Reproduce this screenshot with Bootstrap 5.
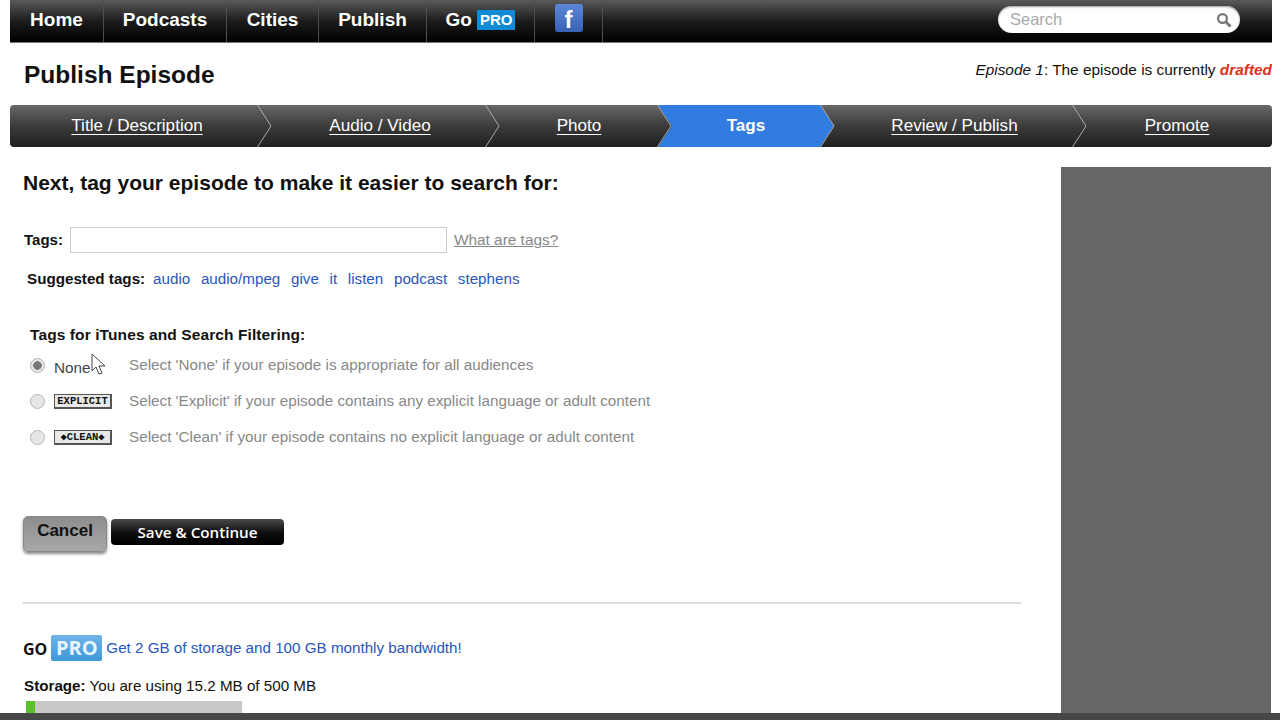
<!DOCTYPE html>
<html lang="en">
<head>
    <meta charset="UTF-8">
    <meta name="viewport" content="width=device-width, initial-scale=1.0">
    <title>Publish Episode</title>
    <link href="https://cdn.jsdelivr.net/npm/bootstrap@5.3.0/dist/css/bootstrap.min.css" rel="stylesheet">
    <style>
        /* page frame */
        html, body { height: 720px; overflow: hidden; }
        body { font-family: "Liberation Sans", Arial, sans-serif; font-size: 14px; color: #111; background: #fff; }
        .page-wrap { height: 713px; margin: 0 8px 0 10px; overflow: hidden; }
        .bottom-strip { height: 7px; background: #474747; }

        /* top nav */
        .top-bar { height: 43px; background: linear-gradient(#5a5a5a 0, #1c1c1c 50%, #000 100%); border-bottom: 1px solid #777; }
        .top-item { display: flex; align-items: center; justify-content: center; height: 42px; padding-bottom: 2px; color: #fff; font-size: 19px; font-weight: 700; text-decoration: none; border-right: 1px solid #4c4c4c; }
        .w-home { width: 94px; }
        .w-podcasts { width: 123px; }
        .w-cities { width: 92px; }
        .w-publish { width: 108px; }
        .w-go { width: 108px; }
        .w-fb { width: 68px; }
        .pro-small { background: #0d8bd6; color: #fff; font-size: 15px; font-weight: 700; padding: 1px 3px; margin-left: 5px; line-height: 18px; }
        .fb-box { width: 28px; height: 28px; margin-top: -4px; padding-top: 3px; background: linear-gradient(#5b86d8, #3a62b4); border-radius: 3px; color: #fff; font-size: 24px; font-weight: 700; line-height: 25px; text-align: center; }
        .search-pill { width: 242px; height: 27px; margin: 6px 32px 0 0; background: #fff; border-radius: 14px; padding: 0 8px 0 12px; box-shadow: 0 1px 2px #999 inset; }
        .search-input { border: 0; outline: 0; width: 190px; font-size: 16.5px; padding: 0; background: transparent; }
        .search-input::placeholder { color: #aaa; }

        /* title row */
        .title-row { height: 62px; padding: 0 0 0 14px; }
        .page-title { font-size: 24.5px; font-weight: 700; margin: 19px 0 0; line-height: 26px; color: #111; }
        .ep-status { font-size: 15.4px; margin-top: 18px; line-height: 18px; }
        .ep-drafted { color: #e0301e; font-weight: 700; font-style: italic; }

        /* wizard steps */
        .steps-bar { height: 42px; border-radius: 4px; background: linear-gradient(#686868 0, #3b3b3b 50%, #202020 100%); overflow: hidden; }
        .step-item { position: relative; display: flex; align-items: center; justify-content: center; height: 42px; padding-left: 14px; color: #fff; font-size: 17.1px; text-decoration: underline; text-underline-offset: 3px; }
        .step-chev { position: absolute; top: 0; right: -14px; width: 15px; height: 42px; z-index: 2; }
        .step-chev-left { right: auto; left: 0; }
        .s-title { width: 248px; padding-left: 6px; }
        .s-audio { width: 228px; padding-left: 16px; }
        .s-photo { width: 172px; }
        .s-tags { width: 176px; margin-right: -14px; padding-right: 14px; z-index: 1; background: #317ce0; font-weight: 700; text-decoration: none; clip-path: polygon(0 0, 162px 0, 176px 50%, 162px 100%, 0 100%, 14px 50%); }
        .s-review { width: 253px; padding-left: 16px; }
        .s-promote { width: 199px; padding-left: 9px; }

        /* left column */
        .main-col { width: 1051px; padding-left: 13px; position: relative; }
        .side-col { width: 210px; height: 546px; margin-top: 20px; background: #666; }
        .form-heading { font-size: 21px; font-weight: 700; line-height: 24px; margin: 24px 0 0; color: #111; }
        .tags-row { margin: 32px 0 0 1px; height: 26px; }
        .field-label { font-weight: 700; font-size: 15px; margin: 0 7px 0 0; }
        .tags-input { width: 377px; height: 26px; padding: 0 4px; border: 1px solid #ccc; border-radius: 0; }
        .what-link { color: #888; font-size: 15.4px; margin-left: 7px; }
        .suggest-row { margin: 16px 0 0 4px; line-height: 20px; }
        .suggest-row b { font-size: 15.2px; margin-right: 4px; }
        .tag-link { color: #2a56b8; text-decoration: none; font-size: 15.2px; margin-right: 10.7px; }
        .filter-title { font-weight: 700; font-size: 15.5px; margin: 36px 0 0 7px; line-height: 20px; letter-spacing: .1px; }
        .rating-row { height: 36px; margin-left: 7px; color: #888; font-size: 15.25px; }
        .filter-title + .rating-row { margin-top: 2px; }
        .rating-radio { width: 15px; height: 15px; margin: 0 10px 0 0; background-color: #e6e6e6; border: 1px solid #b5b5b5; flex: none; }
        .rating-radio:checked { background-color: #e6e6e6; border-color: #b5b5b5; background-image: radial-gradient(circle, #777 0 4px, transparent 4.5px); }
        .rating-tag { width: 58px; margin: 0 17px 0 -1px; flex: none; }
        .rating-none { color: #444; font-size: 15.25px; padding-top: 6px; }
        .rating-box { height: 15px; border: 1px solid #555; border-bottom-width: 2px; border-right-width: 2px; background: #e8e8e8; color: #111; font: 700 10.5px/12px "Liberation Mono", monospace; text-align: center; white-space: nowrap; overflow: hidden; }
        .arrow-cursor { position: absolute; left: 81px; top: 206px; width: 16px; height: 24px; }

        /* buttons */
        .btn-row { margin: 61px 0 0 0; }
        .btn-cancel { width: 84px; height: 36px; padding: 0 0 6px; background: linear-gradient(#8d8d8d, #a8a8a8); border: 1px solid #888; border-radius: 5px; color: #111; font-size: 17px; font-weight: 700; box-shadow: 0 2px 3px #888; }
        .btn-save { width: 173px; height: 26px; padding: 0; margin-left: 4px; margin-top: 3px; background: linear-gradient(#4a4a4a, #0c0c0c 55%, #000); border: 0; border-radius: 4px; color: #fff; font-family: "Open Sans", sans-serif; font-size: 15.2px; font-weight: 600; line-height: 26px; }
        .rule-line { width: 998px; margin: 50px 0 0; border-top: 2px solid #ddd; opacity: 1; }

        /* pro footer */
        .pro-row { margin-top: 31px; height: 27px; }
        .go-word { font-family: "Open Sans", sans-serif; font-weight: 700; font-size: 16px; margin-right: 4px; }
        .pro-big { width: 51px; height: 26px; margin-top: -2px; background: linear-gradient(#6fb5e8, #3d97db); border-radius: 2px; color: #e8f4ff; font-family: "Open Sans", sans-serif; font-size: 20px; font-weight: 700; line-height: 26px; text-align: center; margin-right: 4px; }
        .pro-link { color: #2a56b8; text-decoration: none; font-size: 15.2px; }
        .storage-line { margin: 15px 0 0 1px; font-size: 15.2px; line-height: 18px; }
        .storage-bar { width: 216px; height: 14px; margin: 6px 0 0 3px; background: #c8c8c8; border-radius: 0; }
        .storage-fill { width: 9px; background: #5cc02c; }
    </style>
</head>
<body>
    <div class="page-wrap">
        <nav class="top-bar d-flex justify-content-between">
            <div class="d-flex">
                <a class="top-item w-home" href="#">Home</a>
                <a class="top-item w-podcasts" href="#">Podcasts</a>
                <a class="top-item w-cities" href="#">Cities</a>
                <a class="top-item w-publish" href="#">Publish</a>
                <a class="top-item w-go" href="#">Go <span class="pro-small">PRO</span></a>
                <a class="top-item w-fb" href="#"><span class="fb-box">f</span></a>
            </div>
            <div class="search-pill d-flex align-items-center justify-content-between">
                <input class="search-input" type="text" placeholder="Search">
                <svg width="16" height="16" viewBox="0 0 16 16"><circle cx="6.5" cy="6.5" r="4.4" fill="none" stroke="#777" stroke-width="2.2"/><path d="M9.8 9.8l4.7 4.7" stroke="#777" stroke-width="3"/></svg>
            </div>
        </nav>

        <div class="title-row d-flex justify-content-between">
            <h1 class="page-title">Publish Episode</h1>
            <div class="ep-status"><em>Episode 1</em>: The episode is currently <span class="ep-drafted">drafted</span></div>
        </div>

        <div class="steps-bar d-flex">
            <a class="step-item s-title" href="#" style="color:#fff">Title / Description
                <svg class="step-chev" viewBox="0 0 15 42"><path d="M.5 0L14 21 .5 42" fill="none" stroke="#aaa"/></svg></a>
            <a class="step-item s-audio" href="#" style="color:#fff">Audio / Video
                <svg class="step-chev" viewBox="0 0 15 42"><path d="M.5 0L14 21 .5 42" fill="none" stroke="#aaa"/></svg></a>
            <a class="step-item s-photo" href="#" style="color:#fff">Photo
                <svg class="step-chev" viewBox="0 0 15 42"><path d="M.5 0L14 21 .5 42" fill="none" stroke="#aaa"/></svg></a>
            <a class="step-item s-tags" href="#" style="color:#fff">Tags</a>
            <a class="step-item s-review" href="#" style="color:#fff">
                <svg class="step-chev step-chev-left" viewBox="0 0 15 42"><path d="M.5 0L14 21 .5 42" fill="none" stroke="#aaa"/></svg>Review / Publish
                <svg class="step-chev" viewBox="0 0 15 42"><path d="M.5 0L14 21 .5 42" fill="none" stroke="#aaa"/></svg></a>
            <a class="step-item s-promote" href="#" style="color:#fff">Promote</a>
        </div>

        <div class="d-flex">
            <div class="main-col">
                <h2 class="form-heading">Next, tag your episode to make it easier to search for:</h2>

                <div class="tags-row d-flex align-items-center">
                    <label class="field-label" for="tags">Tags:</label>
                    <input class="form-control tags-input" id="tags" type="text">
                    <a class="what-link" href="#">What are tags?</a>
                </div>

                <div class="suggest-row">
                    <b>Suggested tags:</b>
                    <a class="tag-link" href="#">audio</a><a class="tag-link" href="#">audio/mpeg</a><a class="tag-link" href="#">give</a><a class="tag-link" href="#">it</a><a class="tag-link" href="#">listen</a><a class="tag-link" href="#">podcast</a><a class="tag-link" href="#">stephens</a>
                </div>

                <div class="filter-title">Tags for iTunes and Search Filtering:</div>
                <div class="rating-row d-flex align-items-center">
                    <input class="form-check-input rating-radio" type="radio" name="rating" checked>
                    <span class="rating-tag rating-none">None</span>
                    <span>Select 'None' if your episode is appropriate for all audiences</span>
                </div>
                <div class="rating-row d-flex align-items-center">
                    <input class="form-check-input rating-radio" type="radio" name="rating">
                    <span class="rating-tag rating-box">EXPLICIT</span>
                    <span>Select 'Explicit' if your episode contains any explicit language or adult content</span>
                </div>
                <div class="rating-row d-flex align-items-center">
                    <input class="form-check-input rating-radio" type="radio" name="rating">
                    <span class="rating-tag rating-box">&#9670;CLEAN&#9670;</span>
                    <span>Select 'Clean' if your episode contains no explicit language or adult content</span>
                </div>
                <svg class="arrow-cursor" viewBox="0 0 16 24"><path d="M1 1v17l4-4 3 7 3-1-3-7h6z" fill="#fff" stroke="#444"/></svg>

                <div class="btn-row d-flex align-items-start">
                    <button class="btn btn-cancel" type="button">Cancel</button>
                    <button class="btn btn-save" type="button">Save &amp; Continue</button>
                </div>

                <hr class="rule-line">

                <div class="pro-row d-flex align-items-center">
                    <span class="go-word">GO</span>
                    <span class="pro-big">PRO</span>
                    <a class="pro-link" href="#">Get 2 GB of storage and 100 GB monthly bandwidth!</a>
                </div>
                <div class="storage-line"><b>Storage:</b> You are using 15.2 MB of 500 MB</div>
                <div class="progress storage-bar">
                    <div class="progress-bar storage-fill"></div>
                </div>
            </div>
            <div class="side-col"></div>
        </div>
    </div>
    <div class="bottom-strip"></div>

    <script src="https://cdn.jsdelivr.net/npm/bootstrap@5.3.0/dist/js/bootstrap.bundle.min.js"></script>
</body>
</html>
